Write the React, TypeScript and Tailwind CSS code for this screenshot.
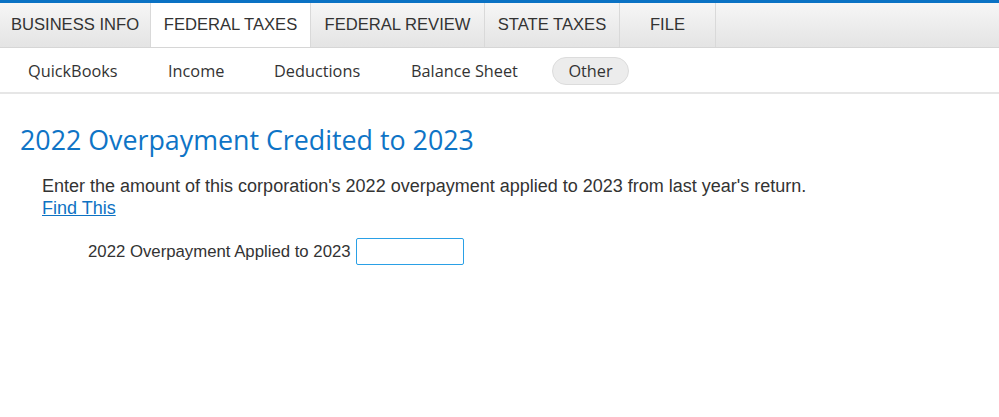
import React from "react";

const tabs = [
  { label: "BUSINESS INFO", w: 151 },
  { label: "FEDERAL TAXES", w: 160, active: true },
  { label: "FEDERAL REVIEW", w: 174 },
  { label: "STATE TAXES", w: 135 },
  { label: "FILE", w: 96 },
];

export default function App() {
  return (
    <div className="w-[999px] h-[417px] bg-white overflow-hidden" style={{ fontFamily: "'Liberation Sans', Arial, sans-serif" }}>
      <div className="h-[3px] bg-[#0a72c4]" />
      <div className="flex h-[45px] bg-gradient-to-b from-[#f6f6f6] to-[#e4e4e4] border-b border-[#d6d6d6]">
        {tabs.map((t) => (
          <div
            key={t.label}
            style={{ width: t.w }}
            className={`flex items-center justify-center text-[16.6px] text-[#333] border-r border-[#d9d9d9] ${t.active ? "bg-white" : ""}`}
          >
            {t.label}
          </div>
        ))}
      </div>
      <div className="h-[46px] pt-[2px] border-b-2 border-[#e6e6e6] flex items-center text-[16.3px] text-[#333]" style={{ fontFamily: "'Open Sans', Lato, sans-serif" }}>
        <div className="flex items-center pl-[28px]">
          <span className="w-[140px]">QuickBooks</span>
          <span className="w-[106px]">Income</span>
          <span className="w-[137px]">Deductions</span>
          <span className="w-[141px]">Balance Sheet</span>
          <span className="h-[28px] w-[77px] rounded-full bg-[#ececec] border border-[#dcdcdc] flex items-center justify-center">Other</span>
        </div>
      </div>
      <div className="pl-[20px] pt-[30px]">
        <h1 className="text-[26.8px] leading-[32px] text-[#0e74c6]" style={{ fontFamily: "'Open Sans', Lato, sans-serif" }}>
          2022 Overpayment Credited to 2023
        </h1>
        <div className="pl-[22px] pt-[19px] text-[18px] leading-[22px] text-[#333]">
          <p>Enter the amount of this corporation's 2022 overpayment applied to 2023 from last year's return.</p>
          <a className="text-[#0d72c3] underline">Find This</a>
        </div>
        <div className="flex items-center pl-[68px] pt-[19px] text-[16.75px] text-[#333]">
          <span>2022 Overpayment Applied to 2023</span>
          <input className="ml-[5px] w-[108px] h-[27px] border border-[#2aa0e6] rounded-[2px] outline-none" />
        </div>
      </div>
    </div>
  );
}
